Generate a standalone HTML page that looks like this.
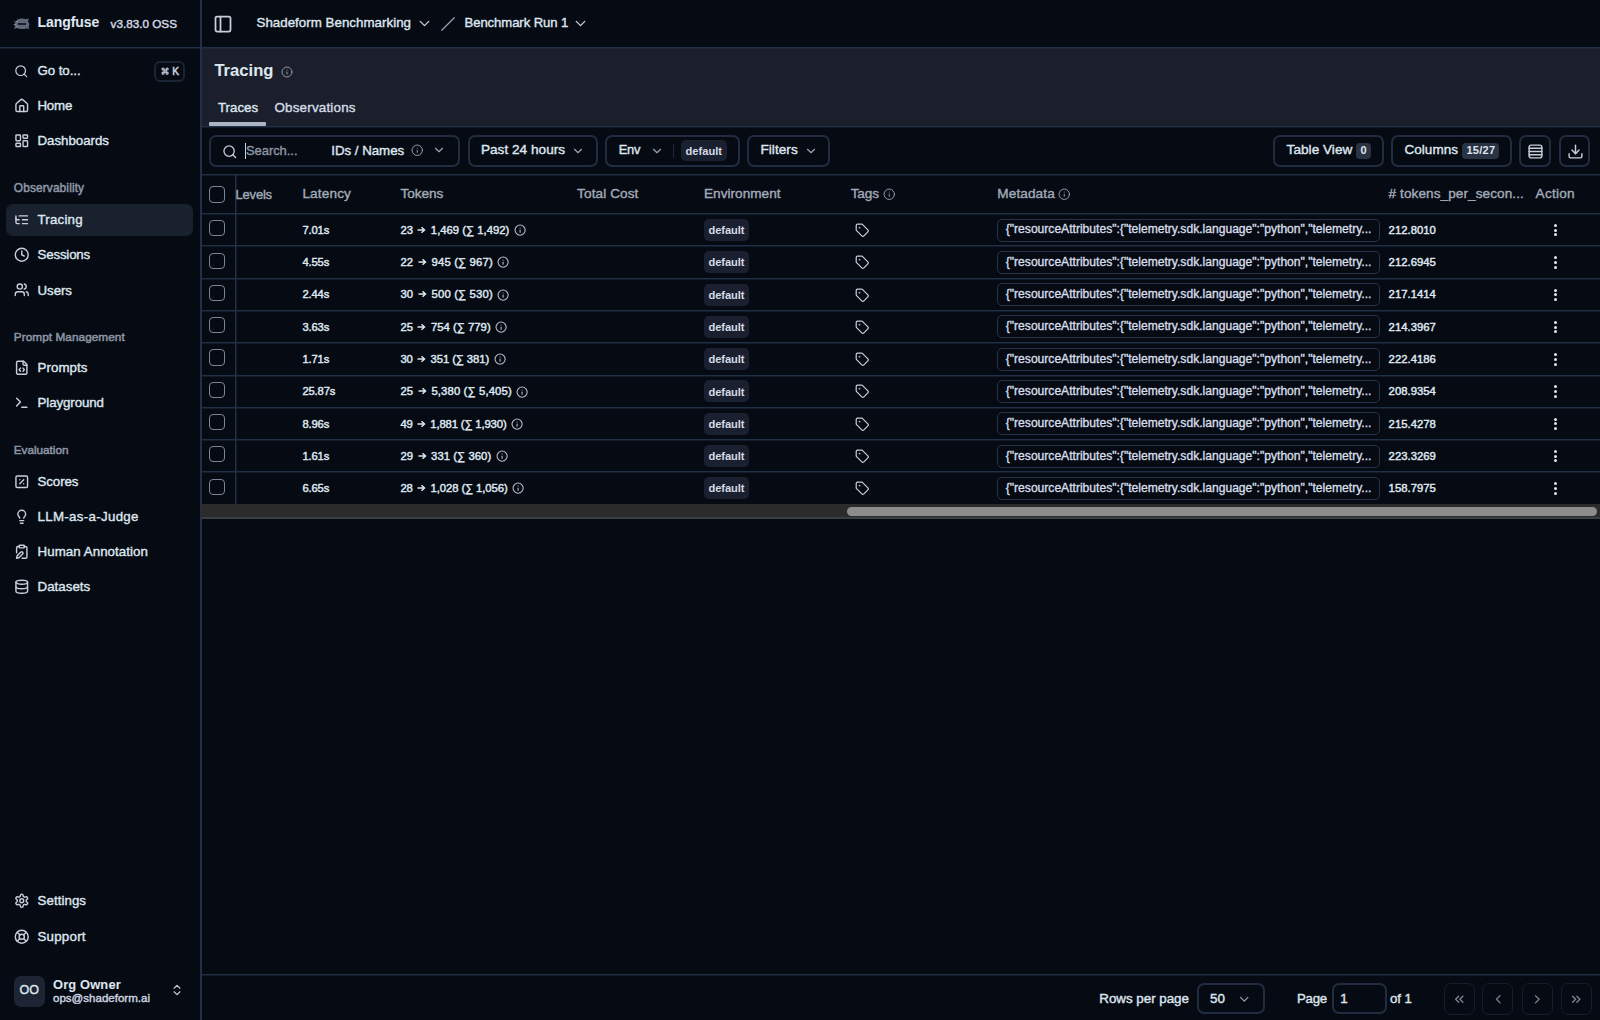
<!DOCTYPE html>
<html><head><meta charset="utf-8"><style>
html,body{margin:0;padding:0;width:1600px;height:1020px;overflow:hidden;background:#060a13}
body{position:relative;font-family:"Liberation Sans",sans-serif}
.a{position:absolute}
.t{position:absolute;white-space:nowrap}
</style></head><body>
<div class="a" style="left:0.00px;top:0.00px;width:1600.00px;height:1020.00px;background:#060a13"></div>
<div class="a" style="left:201.00px;top:48.00px;width:1399.00px;height:79.00px;background:#1a1f2b"></div>
<div class="a" style="left:0.00px;top:47.00px;width:1600.00px;height:1.00px;background:#223047"></div>
<div class="a" style="left:0.00px;top:48.00px;width:1600.00px;height:1.00px;background:rgba(34,48,71,0.45)"></div>
<div class="a" style="left:200.00px;top:0.00px;width:2.00px;height:1020.00px;background:#223047"></div>
<div class="a" style="left:201.00px;top:126.00px;width:1399.00px;height:1.00px;background:#223047"></div>
<div class="a" style="left:201.00px;top:127.00px;width:1399.00px;height:1.00px;background:rgba(34,48,71,0.45)"></div>
<div class="a" style="left:201.00px;top:174.00px;width:1399.00px;height:1.00px;background:#223047"></div>
<div class="a" style="left:201.00px;top:175.00px;width:1399.00px;height:1.00px;background:rgba(34,48,71,0.45)"></div>
<div class="a" style="left:201.00px;top:974.00px;width:1399.00px;height:1.00px;background:#223047"></div>
<div class="a" style="left:201.00px;top:975.00px;width:1399.00px;height:1.00px;background:rgba(34,48,71,0.45)"></div>
<svg class="a" style="left:13px;top:17.5px" width="17" height="11.5" viewBox="0 0 17 11.5"><path d="M0.5 2.5 3.5 4 4.5 1.5C6.5 0.3 10 0 12.5 1L16 0.8 15 3.5C16.5 5 16.8 7 15.5 9L16.5 11 13 10.5C10.5 11.5 6.5 11.5 4 10L1 11 2.2 8 0 6.5 2.5 5.5z" fill="#5f6778"/><path d="M3 4 5 2.5M2 6.2h1.2M3.5 9.2 5 8" stroke="#9aa2b0" stroke-width="1"/><path d="M5 6H13" stroke="#0b0f17" stroke-width="1.6"/></svg>
<div class="t" style="left:37.50px;top:15.45px;font-size:14px;line-height:14px;color:#dfe6ef;font-weight:700;-webkit-text-stroke:0.05px #dfe6ef;letter-spacing:-0.047px;">Langfuse</div>
<div class="t" style="left:110.60px;top:17.79px;font-size:11.7px;line-height:11.7px;color:#cfd6e0;font-weight:400;-webkit-text-stroke:0.45px #cfd6e0;letter-spacing:0.006px;">v3.83.0 OSS</div>
<svg class="a" style="left:14.20px;top:64.20px;" width="14.5" height="14.5" viewBox="0 0 24 24" fill="none" stroke="#c8cfda" stroke-width="2" stroke-linecap="round" stroke-linejoin="round"><circle cx="11" cy="11" r="8"/><path d="m21 21-4.3-4.3"/></svg>
<div class="t" style="left:37.50px;top:64.34px;font-size:13.3px;line-height:13.3px;color:#dfe6ef;font-weight:400;-webkit-text-stroke:0.38px #dfe6ef;letter-spacing:-0.073px;">Go to...</div>
<div class="a" style="left:154.00px;top:61.00px;width:31.00px;height:20.50px;border:2px solid #1b2436;border-radius:6px;box-sizing:border-box"></div>
<svg class="a" style="left:160.80px;top:67.20px;" width="8.2" height="8.2" viewBox="0 0 24 24" fill="none" stroke="#c8cfda" stroke-width="3.2" stroke-linecap="round" stroke-linejoin="round"><path d="M15 6v12a3 3 0 1 0 3-3H6a3 3 0 1 0 3 3V6a3 3 0 1 0-3 3h12a3 3 0 1 0-3-3"/></svg>
<div class="t" style="left:172.20px;top:66.76px;font-size:10.2px;line-height:10.2px;color:#c8cfda;font-weight:400;-webkit-text-stroke:0.5px #c8cfda;letter-spacing:-0.503px;">K</div>
<svg class="a" style="left:13.50px;top:98.10px;" width="15.5" height="15.5" viewBox="0 0 24 24" fill="none" stroke="#c8cfda" stroke-width="2.2" stroke-linecap="round" stroke-linejoin="round"><path d="M15 21v-8a1 1 0 0 0-1-1h-4a1 1 0 0 0-1 1v8"/><path d="M3 10a2 2 0 0 1 .709-1.528l7-5.999a2 2 0 0 1 2.582 0l7 5.999A2 2 0 0 1 21 10v9a2 2 0 0 1-2 2H5a2 2 0 0 1-2-2z"/></svg>
<div class="t" style="left:37.50px;top:99.34px;font-size:13.3px;line-height:13.3px;color:#dfe6ef;font-weight:400;-webkit-text-stroke:0.38px #dfe6ef;letter-spacing:-0.228px;">Home</div>
<svg class="a" style="left:13.50px;top:133.10px;" width="15.5" height="15.5" viewBox="0 0 24 24" fill="none" stroke="#c8cfda" stroke-width="2.2" stroke-linecap="round" stroke-linejoin="round"><rect width="7" height="9" x="3" y="3" rx="1"/><rect width="7" height="5" x="14" y="3" rx="1"/><rect width="7" height="9" x="14" y="12" rx="1"/><rect width="7" height="5" x="3" y="16" rx="1"/></svg>
<div class="t" style="left:37.50px;top:134.34px;font-size:13.3px;line-height:13.3px;color:#dfe6ef;font-weight:400;-webkit-text-stroke:0.38px #dfe6ef;letter-spacing:-0.024px;">Dashboards</div>
<div class="t" style="left:13.80px;top:182.72px;font-size:11.9px;line-height:11.9px;color:#8d96a5;font-weight:400;-webkit-text-stroke:0.5px #8d96a5;letter-spacing:0.127px;">Observability</div>
<div class="a" style="left:5.70px;top:204.00px;width:187.00px;height:31.50px;background:#19202e;border-radius:7px"></div>
<svg class="a" style="left:13.50px;top:211.50px;" width="15.5" height="15.5" viewBox="0 0 24 24" fill="none" stroke="#c8cfda" stroke-width="2.2" stroke-linecap="round" stroke-linejoin="round"><path d="M21 12h-8"/><path d="M21 6H8"/><path d="M21 18h-8"/><path d="M3 6v4c0 1.1.9 2 2 2h3"/><path d="M3 10v6c0 1.1.9 2 2 2h3"/></svg>
<div class="t" style="left:37.50px;top:212.74px;font-size:13.3px;line-height:13.3px;color:#dfe6ef;font-weight:400;-webkit-text-stroke:0.38px #dfe6ef;letter-spacing:0.208px;">Tracing</div>
<svg class="a" style="left:13.50px;top:246.60px;" width="15.5" height="15.5" viewBox="0 0 24 24" fill="none" stroke="#c8cfda" stroke-width="2.2" stroke-linecap="round" stroke-linejoin="round"><circle cx="12" cy="12" r="10"/><polyline points="12 6 12 12 16 14"/></svg>
<div class="t" style="left:37.50px;top:247.84px;font-size:13.3px;line-height:13.3px;color:#dfe6ef;font-weight:400;-webkit-text-stroke:0.38px #dfe6ef;letter-spacing:-0.174px;">Sessions</div>
<svg class="a" style="left:13.50px;top:282.30px;" width="15.5" height="15.5" viewBox="0 0 24 24" fill="none" stroke="#c8cfda" stroke-width="2.2" stroke-linecap="round" stroke-linejoin="round"><path d="M16 21v-2a4 4 0 0 0-4-4H6a4 4 0 0 0-4 4v2"/><circle cx="9" cy="7" r="4"/><path d="M22 21v-2a4 4 0 0 0-3-3.87"/><path d="M16 3.13a4 4 0 0 1 0 7.75"/></svg>
<div class="t" style="left:37.50px;top:283.54px;font-size:13.3px;line-height:13.3px;color:#dfe6ef;font-weight:400;-webkit-text-stroke:0.38px #dfe6ef;letter-spacing:-0.057px;">Users</div>
<div class="t" style="left:13.80px;top:331.91px;font-size:11.8px;line-height:11.8px;color:#8d96a5;font-weight:400;-webkit-text-stroke:0.5px #8d96a5;letter-spacing:0.048px;">Prompt Management</div>
<svg class="a" style="left:13.50px;top:360.00px;" width="15.5" height="15.5" viewBox="0 0 24 24" fill="none" stroke="#c8cfda" stroke-width="2.2" stroke-linecap="round" stroke-linejoin="round"><path d="M10 12.5 8 15l2 2.5"/><path d="m14 12.5 2 2.5-2 2.5"/><path d="M14 2v4a2 2 0 0 0 2 2h4"/><path d="M15 2H6a2 2 0 0 0-2 2v16a2 2 0 0 0 2 2h12a2 2 0 0 0 2-2V7z"/></svg>
<div class="t" style="left:37.50px;top:361.24px;font-size:13.3px;line-height:13.3px;color:#dfe6ef;font-weight:400;-webkit-text-stroke:0.38px #dfe6ef;letter-spacing:0.081px;">Prompts</div>
<svg class="a" style="left:13.50px;top:395.00px;" width="15.5" height="15.5" viewBox="0 0 24 24" fill="none" stroke="#c8cfda" stroke-width="2.2" stroke-linecap="round" stroke-linejoin="round"><polyline points="4 17 10 11 4 5"/><line x1="12" x2="20" y1="19" y2="19"/></svg>
<div class="t" style="left:37.50px;top:396.24px;font-size:13.3px;line-height:13.3px;color:#dfe6ef;font-weight:400;-webkit-text-stroke:0.38px #dfe6ef;letter-spacing:-0.087px;">Playground</div>
<div class="t" style="left:13.80px;top:445.01px;font-size:11.8px;line-height:11.8px;color:#8d96a5;font-weight:400;-webkit-text-stroke:0.5px #8d96a5;letter-spacing:-0.045px;">Evaluation</div>
<svg class="a" style="left:13.50px;top:473.75px;" width="15.5" height="15.5" viewBox="0 0 24 24" fill="none" stroke="#c8cfda" stroke-width="2.2" stroke-linecap="round" stroke-linejoin="round"><rect width="18" height="18" x="3" y="3" rx="2"/><path d="m15 9-6 6"/><path d="M9 9h.01"/><path d="M15 15h.01"/></svg>
<div class="t" style="left:37.50px;top:474.99px;font-size:13.3px;line-height:13.3px;color:#dfe6ef;font-weight:400;-webkit-text-stroke:0.38px #dfe6ef;letter-spacing:-0.078px;">Scores</div>
<svg class="a" style="left:13.50px;top:508.75px;" width="15.5" height="15.5" viewBox="0 0 24 24" fill="none" stroke="#c8cfda" stroke-width="2.2" stroke-linecap="round" stroke-linejoin="round"><path d="M15 14c.2-1 .7-1.7 1.5-2.5 1-.9 1.5-2.2 1.5-3.5A6 6 0 0 0 6 8c0 1 .2 2.2 1.5 3.5.7.7 1.3 1.5 1.5 2.5"/><path d="M9 18h6"/><path d="M10 22h4"/></svg>
<div class="t" style="left:37.50px;top:509.99px;font-size:13.3px;line-height:13.3px;color:#dfe6ef;font-weight:400;-webkit-text-stroke:0.38px #dfe6ef;letter-spacing:0.320px;">LLM-as-a-Judge</div>
<svg class="a" style="left:13.50px;top:544.00px;" width="15.5" height="15.5" viewBox="0 0 24 24" fill="none" stroke="#c8cfda" stroke-width="2.2" stroke-linecap="round" stroke-linejoin="round"><rect width="8" height="4" x="8" y="2" rx="1"/><path d="M10.4 12.6a2 2 0 0 1 3 3L8 21l-4 1 1-4Z"/><path d="M16 4h2a2 2 0 0 1 2 2v14a2 2 0 0 1-2 2h-5.5"/><path d="M4 13.5V6a2 2 0 0 1 2-2h2"/></svg>
<div class="t" style="left:37.50px;top:545.24px;font-size:13.3px;line-height:13.3px;color:#dfe6ef;font-weight:400;-webkit-text-stroke:0.38px #dfe6ef;letter-spacing:0.071px;">Human Annotation</div>
<svg class="a" style="left:13.50px;top:579.00px;" width="15.5" height="15.5" viewBox="0 0 24 24" fill="none" stroke="#c8cfda" stroke-width="2.2" stroke-linecap="round" stroke-linejoin="round"><ellipse cx="12" cy="5" rx="9" ry="3"/><path d="M3 5V19A9 3 0 0 0 21 19V5"/><path d="M3 12A9 3 0 0 0 21 12"/></svg>
<div class="t" style="left:37.50px;top:580.24px;font-size:13.3px;line-height:13.3px;color:#dfe6ef;font-weight:400;-webkit-text-stroke:0.38px #dfe6ef;letter-spacing:0.038px;">Datasets</div>
<svg class="a" style="left:13.50px;top:893.00px;" width="15.5" height="15.5" viewBox="0 0 24 24" fill="none" stroke="#c8cfda" stroke-width="2.2" stroke-linecap="round" stroke-linejoin="round"><path d="M12.22 2h-.44a2 2 0 0 0-2 2v.18a2 2 0 0 1-1 1.73l-.43.25a2 2 0 0 1-2 0l-.15-.08a2 2 0 0 0-2.73.73l-.22.38a2 2 0 0 0 .73 2.73l.15.1a2 2 0 0 1 1 1.72v.51a2 2 0 0 1-1 1.74l-.15.09a2 2 0 0 0-.73 2.73l.22.38a2 2 0 0 0 2.73.73l.15-.08a2 2 0 0 1 2 0l.43.25a2 2 0 0 1 1 1.73V20a2 2 0 0 0 2 2h.44a2 2 0 0 0 2-2v-.18a2 2 0 0 1 1-1.73l.43-.25a2 2 0 0 1 2 0l.15.08a2 2 0 0 0 2.73-.73l.22-.39a2 2 0 0 0-.73-2.73l-.15-.08a2 2 0 0 1-1-1.74v-.5a2 2 0 0 1 1-1.74l.15-.09a2 2 0 0 0 .73-2.73l-.22-.38a2 2 0 0 0-2.73-.73l-.15.08a2 2 0 0 1-2 0l-.43-.25a2 2 0 0 1-1-1.73V4a2 2 0 0 0-2-2z"/><circle cx="12" cy="12" r="3"/></svg>
<div class="t" style="left:37.50px;top:894.24px;font-size:13.3px;line-height:13.3px;color:#dfe6ef;font-weight:400;-webkit-text-stroke:0.38px #dfe6ef;letter-spacing:0.064px;">Settings</div>
<svg class="a" style="left:13.50px;top:928.50px;" width="15.5" height="15.5" viewBox="0 0 24 24" fill="none" stroke="#c8cfda" stroke-width="2.2" stroke-linecap="round" stroke-linejoin="round"><circle cx="12" cy="12" r="10"/><path d="m4.93 4.93 4.24 4.24"/><path d="m14.83 9.17 4.24-4.24"/><path d="m14.83 14.83 4.24 4.24"/><path d="m9.17 14.83-4.24 4.24"/><circle cx="12" cy="12" r="4"/></svg>
<div class="t" style="left:37.50px;top:929.74px;font-size:13.3px;line-height:13.3px;color:#dfe6ef;font-weight:400;-webkit-text-stroke:0.38px #dfe6ef;letter-spacing:0.237px;">Support</div>
<div class="a" style="left:13.75px;top:975.50px;width:31.25px;height:31.25px;background:#1d2434;border-radius:7px"></div>
<div class="t" style="left:19.50px;top:984.42px;font-size:12.5px;line-height:12.5px;color:#dfe6ef;font-weight:400;-webkit-text-stroke:0.38px #dfe6ef;">OO</div>
<div class="t" style="left:53.00px;top:978.58px;font-size:12.9px;line-height:12.9px;color:#dfe6ef;font-weight:700;-webkit-text-stroke:0.05px #dfe6ef;letter-spacing:0.137px;">Org Owner</div>
<div class="t" style="left:53.00px;top:992.76px;font-size:11.5px;line-height:11.5px;color:#cfd6e0;font-weight:400;-webkit-text-stroke:0.4px #cfd6e0;letter-spacing:0.021px;">ops@shadeform.ai</div>
<svg class="a" style="left:170.00px;top:983.00px;" width="14" height="14" viewBox="0 0 24 24" fill="none" stroke="#c8cfda" stroke-width="2" stroke-linecap="round" stroke-linejoin="round"><path d="m7 15 5 5 5-5"/><path d="m7 9 5-5 5 5"/></svg>
<svg class="a" style="left:213.00px;top:13.50px;" width="20" height="20" viewBox="0 0 24 24" fill="none" stroke="#c8cfda" stroke-width="2.1" stroke-linecap="round" stroke-linejoin="round"><rect width="18" height="18" x="3" y="3" rx="2"/><path d="M9 3v18"/></svg>
<div class="t" style="left:256.50px;top:15.99px;font-size:13.3px;line-height:13.3px;color:#dfe6ef;font-weight:400;-webkit-text-stroke:0.38px #dfe6ef;letter-spacing:0.035px;">Shadeform Benchmarking</div>
<svg class="a" style="left:415.50px;top:14.70px;" width="17" height="17" viewBox="0 0 24 24" fill="none" stroke="#c8cfda" stroke-width="1.9" stroke-linecap="round" stroke-linejoin="round"><path d="m6 9 6 6 6-6"/></svg>
<svg class="a" style="left:440px;top:16px" width="16" height="16" viewBox="0 0 16 16"><path d="M1.5 14.5 14.5 1.5" stroke="#9aa3b2" stroke-width="1.2"/></svg>
<div class="t" style="left:464.50px;top:16.31px;font-size:13.1px;line-height:13.1px;color:#dfe6ef;font-weight:400;-webkit-text-stroke:0.38px #dfe6ef;letter-spacing:-0.068px;">Benchmark Run 1</div>
<svg class="a" style="left:572.00px;top:14.70px;" width="17" height="17" viewBox="0 0 24 24" fill="none" stroke="#c8cfda" stroke-width="1.9" stroke-linecap="round" stroke-linejoin="round"><path d="m6 9 6 6 6-6"/></svg>
<div class="t" style="left:214.40px;top:62.84px;font-size:16.6px;line-height:16.6px;color:#dfe6ef;font-weight:700;-webkit-text-stroke:0.05px #dfe6ef;letter-spacing:0.009px;">Tracing</div>
<svg class="a" style="left:281.00px;top:65.50px;" width="12" height="12" viewBox="0 0 24 24" fill="none" stroke="#9aa3b2" stroke-width="1.8" stroke-linecap="round" stroke-linejoin="round"><circle cx="12" cy="12" r="10"/><path d="M12 16v-4"/><path d="M12 8h.01"/></svg>
<div class="t" style="left:218.00px;top:100.68px;font-size:13.25px;line-height:13.25px;color:#dfe6ef;font-weight:400;-webkit-text-stroke:0.38px #dfe6ef;letter-spacing:-0.000px;">Traces</div>
<div class="t" style="left:274.40px;top:100.55px;font-size:13.4px;line-height:13.4px;color:#d4dbe6;font-weight:400;-webkit-text-stroke:0.38px #d4dbe6;letter-spacing:0.204px;">Observations</div>
<div class="a" style="left:209.40px;top:122.00px;width:57.00px;height:4.00px;background:#aab4c4;border-radius:1px"></div>
<div class="a" style="left:209.30px;top:135.00px;width:250.60px;height:31.50px;border:2px solid #212c40;border-radius:7px;box-sizing:border-box;"></div>
<svg class="a" style="left:221.50px;top:143.50px;" width="15.5" height="15.5" viewBox="0 0 24 24" fill="none" stroke="#c8cfda" stroke-width="2" stroke-linecap="round" stroke-linejoin="round"><circle cx="11" cy="11" r="8"/><path d="m21 21-4.3-4.3"/></svg>
<div class="a" style="left:244.50px;top:142.70px;width:1.00px;height:16.00px;background:#c8cfda"></div>
<div class="t" style="left:246.00px;top:144.78px;font-size:12.9px;line-height:12.9px;color:#8d96a5;font-weight:400;-webkit-text-stroke:0.38px #8d96a5;letter-spacing:-0.016px;">Search...</div>
<div class="t" style="left:331.30px;top:144.44px;font-size:13.3px;line-height:13.3px;color:#dfe6ef;font-weight:400;-webkit-text-stroke:0.38px #dfe6ef;letter-spacing:-0.026px;">IDs / Names</div>
<svg class="a" style="left:411.30px;top:144.20px;" width="12.5" height="12.5" viewBox="0 0 24 24" fill="none" stroke="#9aa3b2" stroke-width="1.8" stroke-linecap="round" stroke-linejoin="round"><circle cx="12" cy="12" r="10"/><path d="M12 16v-4"/><path d="M12 8h.01"/></svg>
<svg class="a" style="left:432.00px;top:143.00px;" width="14" height="14" viewBox="0 0 24 24" fill="none" stroke="#9aa3b2" stroke-width="2" stroke-linecap="round" stroke-linejoin="round"><path d="m6 9 6 6 6-6"/></svg>
<div class="a" style="left:467.60px;top:135.00px;width:130.20px;height:31.50px;border:2px solid #212c40;border-radius:7px;box-sizing:border-box;"></div>
<div class="t" style="left:480.90px;top:143.18px;font-size:13.6px;line-height:13.6px;color:#dfe6ef;font-weight:400;-webkit-text-stroke:0.38px #dfe6ef;letter-spacing:0.032px;">Past 24 hours</div>
<svg class="a" style="left:570.50px;top:143.50px;" width="14" height="14" viewBox="0 0 24 24" fill="none" stroke="#9aa3b2" stroke-width="2" stroke-linecap="round" stroke-linejoin="round"><path d="m6 9 6 6 6-6"/></svg>
<div class="a" style="left:605.30px;top:135.00px;width:134.50px;height:31.50px;border:2px solid #212c40;border-radius:7px;box-sizing:border-box;"></div>
<div class="t" style="left:618.70px;top:143.78px;font-size:12.9px;line-height:12.9px;color:#dfe6ef;font-weight:400;-webkit-text-stroke:0.38px #dfe6ef;letter-spacing:-0.213px;">Env</div>
<svg class="a" style="left:649.50px;top:143.50px;" width="14" height="14" viewBox="0 0 24 24" fill="none" stroke="#9aa3b2" stroke-width="2" stroke-linecap="round" stroke-linejoin="round"><path d="m6 9 6 6 6-6"/></svg>
<div class="a" style="left:672.50px;top:143.50px;width:1.00px;height:14.50px;background:#1d283a"></div>
<div class="a" style="left:680.90px;top:139.70px;width:46.30px;height:21.40px;background:#1a2030;border-radius:5px"></div>
<div class="t" style="left:685.60px;top:145.50px;font-size:11.1px;line-height:11.1px;color:#d4dbe6;font-weight:700;-webkit-text-stroke:0px #d4dbe6;letter-spacing:0.002px;">default</div>
<div class="a" style="left:747.40px;top:135.00px;width:83.10px;height:31.50px;border:2px solid #212c40;border-radius:7px;box-sizing:border-box;"></div>
<div class="t" style="left:760.40px;top:143.18px;font-size:13.6px;line-height:13.6px;color:#dfe6ef;font-weight:400;-webkit-text-stroke:0.38px #dfe6ef;letter-spacing:0.047px;">Filters</div>
<svg class="a" style="left:803.50px;top:143.50px;" width="14" height="14" viewBox="0 0 24 24" fill="none" stroke="#9aa3b2" stroke-width="2" stroke-linecap="round" stroke-linejoin="round"><path d="m6 9 6 6 6-6"/></svg>
<div class="a" style="left:1273.20px;top:135.00px;width:110.50px;height:31.50px;border:2px solid #212c40;border-radius:7px;box-sizing:border-box;"></div>
<div class="t" style="left:1286.60px;top:143.18px;font-size:13.6px;line-height:13.6px;color:#dfe6ef;font-weight:400;-webkit-text-stroke:0.38px #dfe6ef;letter-spacing:0.026px;">Table View</div>
<div class="a" style="left:1356.00px;top:143.00px;width:15.00px;height:15.60px;background:#2a3344;border-radius:4px"></div>
<div class="t" style="left:1360.50px;top:144.89px;font-size:11px;line-height:11px;color:#dfe6ef;font-weight:700;-webkit-text-stroke:0px #dfe6ef;letter-spacing:0.384px;">0</div>
<div class="a" style="left:1391.30px;top:135.00px;width:120.50px;height:31.50px;border:2px solid #212c40;border-radius:7px;box-sizing:border-box;"></div>
<div class="t" style="left:1404.50px;top:143.27px;font-size:13.5px;line-height:13.5px;color:#dfe6ef;font-weight:400;-webkit-text-stroke:0.38px #dfe6ef;letter-spacing:0.038px;">Columns</div>
<div class="a" style="left:1461.90px;top:143.00px;width:37.60px;height:15.60px;background:#2a3344;border-radius:4px"></div>
<div class="t" style="left:1466.50px;top:144.89px;font-size:11px;line-height:11px;color:#dfe6ef;font-weight:700;-webkit-text-stroke:0px #dfe6ef;letter-spacing:0.245px;">15/27</div>
<div class="a" style="left:1519.20px;top:135.00px;width:31.50px;height:31.50px;border:2px solid #212c40;border-radius:7px;box-sizing:border-box;"></div>
<svg class="a" style="left:1526.50px;top:142.50px;" width="17" height="17" viewBox="0 0 24 24" fill="none" stroke="#c8cfda" stroke-width="2" stroke-linecap="round" stroke-linejoin="round"><rect width="18" height="18" x="3" y="3" rx="3"/><path d="M21 7.5H3"/><path d="M21 12H3"/><path d="M21 16.5H3"/></svg>
<div class="a" style="left:1558.60px;top:135.00px;width:31.80px;height:31.50px;border:2px solid #212c40;border-radius:7px;box-sizing:border-box;"></div>
<svg class="a" style="left:1566.50px;top:142.50px;" width="17" height="17" viewBox="0 0 24 24" fill="none" stroke="#c8cfda" stroke-width="2" stroke-linecap="round" stroke-linejoin="round"><path d="M21 15v4a2 2 0 0 1-2 2H5a2 2 0 0 1-2-2v-4"/><polyline points="7 10 12 15 17 10"/><line x1="12" x2="12" y1="15" y2="3"/></svg>
<div class="a" style="left:201.00px;top:213.00px;width:1399.00px;height:1.00px;background:#223047"></div>
<div class="a" style="left:201.00px;top:214.00px;width:1399.00px;height:1.00px;background:rgba(34,48,71,0.45)"></div>
<div class="a" style="left:235.00px;top:175.00px;width:1.00px;height:329.00px;background:#223047"></div>
<div class="a" style="left:236.00px;top:175.00px;width:1.00px;height:329.00px;background:rgba(34,48,71,0.45)"></div>
<div class="a" style="left:209.10px;top:186.40px;width:15.80px;height:16.20px;border:1.3px solid #7c8594;border-radius:4px;box-sizing:border-box"></div>
<div class="t" style="left:235.60px;top:187.99px;font-size:13.0px;line-height:13.0px;color:#a2abb9;font-weight:400;-webkit-text-stroke:0.38px #a2abb9;letter-spacing:-0.217px;">Levels</div>
<div class="t" style="left:302.40px;top:187.48px;font-size:13.6px;line-height:13.6px;color:#a2abb9;font-weight:400;-webkit-text-stroke:0.38px #a2abb9;letter-spacing:0.145px;">Latency</div>
<div class="t" style="left:400.40px;top:187.48px;font-size:13.6px;line-height:13.6px;color:#a2abb9;font-weight:400;-webkit-text-stroke:0.38px #a2abb9;letter-spacing:-0.037px;">Tokens</div>
<div class="t" style="left:577.10px;top:187.48px;font-size:13.6px;line-height:13.6px;color:#a2abb9;font-weight:400;-webkit-text-stroke:0.38px #a2abb9;letter-spacing:0.093px;">Total Cost</div>
<div class="t" style="left:704.00px;top:187.48px;font-size:13.6px;line-height:13.6px;color:#a2abb9;font-weight:400;-webkit-text-stroke:0.38px #a2abb9;letter-spacing:0.025px;">Environment</div>
<div class="t" style="left:850.65px;top:187.48px;font-size:13.6px;line-height:13.6px;color:#a2abb9;font-weight:400;-webkit-text-stroke:0.38px #a2abb9;letter-spacing:-0.124px;">Tags</div>
<div class="t" style="left:997.35px;top:187.48px;font-size:13.6px;line-height:13.6px;color:#a2abb9;font-weight:400;-webkit-text-stroke:0.38px #a2abb9;letter-spacing:0.098px;">Metadata</div>
<div class="t" style="left:1388.60px;top:187.48px;font-size:13.6px;line-height:13.6px;color:#a2abb9;font-weight:400;-webkit-text-stroke:0.38px #a2abb9;letter-spacing:0.074px;"># tokens_per_secon...</div>
<div class="t" style="left:1535.60px;top:187.48px;font-size:13.6px;line-height:13.6px;color:#a2abb9;font-weight:400;-webkit-text-stroke:0.38px #a2abb9;letter-spacing:0.241px;">Action</div>
<svg class="a" style="left:883.20px;top:188.00px;" width="12.5" height="12.5" viewBox="0 0 24 24" fill="none" stroke="#9aa3b2" stroke-width="1.8" stroke-linecap="round" stroke-linejoin="round"><circle cx="12" cy="12" r="10"/><path d="M12 16v-4"/><path d="M12 8h.01"/></svg>
<svg class="a" style="left:1058.30px;top:188.00px;" width="12.5" height="12.5" viewBox="0 0 24 24" fill="none" stroke="#9aa3b2" stroke-width="1.8" stroke-linecap="round" stroke-linejoin="round"><circle cx="12" cy="12" r="10"/><path d="M12 16v-4"/><path d="M12 8h.01"/></svg>
<div class="a" style="left:201.00px;top:245.30px;width:1399.00px;height:1.00px;background:#223047"></div>
<div class="a" style="left:201.00px;top:246.30px;width:1399.00px;height:1.00px;background:rgba(34,48,71,0.45)"></div>
<div class="a" style="left:209.10px;top:220.20px;width:15.80px;height:16.20px;border:1.3px solid #7c8594;border-radius:4px;box-sizing:border-box"></div>
<div class="t tok" style="left:400.40px;top:224.73px;font-size:11.3px;line-height:11.3px;color:#dfe6ef;font-weight:400;-webkit-text-stroke:0.45px #dfe6ef;letter-spacing:0.002px">23 <svg width="9" height="8" viewBox="0 0 9 8" style="vertical-align:0px;margin:0 1.3px"><path d="M0.5 4H7M4.5 1.2 7.5 4 4.5 6.8" fill="none" stroke="#dfe6ef" stroke-width="1.5"/></svg> 1,469 (∑ 1,492)</div>
<div class="t" style="left:302.40px;top:224.82px;font-size:11.2px;line-height:11.2px;color:#dfe6ef;font-weight:400;-webkit-text-stroke:0.45px #dfe6ef;letter-spacing:-0.120px">7.01s</div>
<div class="t" style="left:1388.60px;top:224.73px;font-size:11.3px;line-height:11.3px;color:#dfe6ef;font-weight:400;-webkit-text-stroke:0.45px #dfe6ef;letter-spacing:0.024px">212.8010</div>
<div class="a" style="left:703.70px;top:218.90px;width:45.80px;height:22.00px;background:#1a2030;border-radius:5px"></div>
<div class="t" style="left:708.40px;top:225.00px;font-size:11.1px;line-height:11.1px;color:#d4dbe6;font-weight:700;-webkit-text-stroke:0px #d4dbe6;letter-spacing:-0.031px;">default</div>
<svg class="a" style="left:854.50px;top:222.90px;" width="14.5" height="14.5" viewBox="0 0 24 24" fill="none" stroke="#c8cfda" stroke-width="2" stroke-linecap="round" stroke-linejoin="round"><path d="M12.586 2.586A2 2 0 0 0 11.172 2H4a2 2 0 0 0-2 2v7.172a2 2 0 0 0 .586 1.414l8.704 8.704a2.426 2.426 0 0 0 3.42 0l6.58-6.58a2.426 2.426 0 0 0 0-3.42z"/><circle cx="7.5" cy="7.5" r=".5" fill="currentColor"/></svg>
<div class="a" style="left:997.35px;top:218.50px;width:383.00px;height:23.10px;border:1px solid #28334a;border-radius:5px;box-sizing:border-box"></div>
<div class="t" style="left:1005.75px;top:223.45px;font-size:12.1px;line-height:12.1px;color:#d6dee8;font-weight:400;-webkit-text-stroke:0.35px #d6dee8;letter-spacing:-0.001px;">{&quot;resourceAttributes&quot;:{&quot;telemetry.sdk.language&quot;:&quot;python&quot;,&quot;telemetry...</div>
<div class="a" style="left:1553.80px;top:223.90px;width:3.00px;height:3.00px;background:#dfe6ef;border-radius:50%"></div>
<div class="a" style="left:1553.80px;top:228.60px;width:3.00px;height:3.00px;background:#dfe6ef;border-radius:50%"></div>
<div class="a" style="left:1553.80px;top:233.30px;width:3.00px;height:3.00px;background:#dfe6ef;border-radius:50%"></div>
<div class="a" style="left:201.00px;top:277.60px;width:1399.00px;height:1.00px;background:#223047"></div>
<div class="a" style="left:201.00px;top:278.60px;width:1399.00px;height:1.00px;background:rgba(34,48,71,0.45)"></div>
<div class="a" style="left:209.10px;top:252.50px;width:15.80px;height:16.20px;border:1.3px solid #7c8594;border-radius:4px;box-sizing:border-box"></div>
<div class="t tok" style="left:400.40px;top:257.03px;font-size:11.3px;line-height:11.3px;color:#dfe6ef;font-weight:400;-webkit-text-stroke:0.45px #dfe6ef;letter-spacing:0.163px">22 <svg width="9" height="8" viewBox="0 0 9 8" style="vertical-align:0px;margin:0 1.3px"><path d="M0.5 4H7M4.5 1.2 7.5 4 4.5 6.8" fill="none" stroke="#dfe6ef" stroke-width="1.5"/></svg> 945 (∑ 967)</div>
<div class="t" style="left:302.40px;top:257.12px;font-size:11.2px;line-height:11.2px;color:#dfe6ef;font-weight:400;-webkit-text-stroke:0.45px #dfe6ef;letter-spacing:-0.120px">4.55s</div>
<div class="t" style="left:1388.60px;top:257.03px;font-size:11.3px;line-height:11.3px;color:#dfe6ef;font-weight:400;-webkit-text-stroke:0.45px #dfe6ef;letter-spacing:0.024px">212.6945</div>
<div class="a" style="left:703.70px;top:251.20px;width:45.80px;height:22.00px;background:#1a2030;border-radius:5px"></div>
<div class="t" style="left:708.40px;top:257.30px;font-size:11.1px;line-height:11.1px;color:#d4dbe6;font-weight:700;-webkit-text-stroke:0px #d4dbe6;letter-spacing:-0.031px;">default</div>
<svg class="a" style="left:854.50px;top:255.20px;" width="14.5" height="14.5" viewBox="0 0 24 24" fill="none" stroke="#c8cfda" stroke-width="2" stroke-linecap="round" stroke-linejoin="round"><path d="M12.586 2.586A2 2 0 0 0 11.172 2H4a2 2 0 0 0-2 2v7.172a2 2 0 0 0 .586 1.414l8.704 8.704a2.426 2.426 0 0 0 3.42 0l6.58-6.58a2.426 2.426 0 0 0 0-3.42z"/><circle cx="7.5" cy="7.5" r=".5" fill="currentColor"/></svg>
<div class="a" style="left:997.35px;top:250.80px;width:383.00px;height:23.10px;border:1px solid #28334a;border-radius:5px;box-sizing:border-box"></div>
<div class="t" style="left:1005.75px;top:255.75px;font-size:12.1px;line-height:12.1px;color:#d6dee8;font-weight:400;-webkit-text-stroke:0.35px #d6dee8;letter-spacing:-0.001px;">{&quot;resourceAttributes&quot;:{&quot;telemetry.sdk.language&quot;:&quot;python&quot;,&quot;telemetry...</div>
<div class="a" style="left:1553.80px;top:256.20px;width:3.00px;height:3.00px;background:#dfe6ef;border-radius:50%"></div>
<div class="a" style="left:1553.80px;top:260.90px;width:3.00px;height:3.00px;background:#dfe6ef;border-radius:50%"></div>
<div class="a" style="left:1553.80px;top:265.60px;width:3.00px;height:3.00px;background:#dfe6ef;border-radius:50%"></div>
<div class="a" style="left:201.00px;top:309.90px;width:1399.00px;height:1.00px;background:#223047"></div>
<div class="a" style="left:201.00px;top:310.90px;width:1399.00px;height:1.00px;background:rgba(34,48,71,0.45)"></div>
<div class="a" style="left:209.10px;top:284.80px;width:15.80px;height:16.20px;border:1.3px solid #7c8594;border-radius:4px;box-sizing:border-box"></div>
<div class="t tok" style="left:400.40px;top:289.33px;font-size:11.3px;line-height:11.3px;color:#dfe6ef;font-weight:400;-webkit-text-stroke:0.45px #dfe6ef;letter-spacing:0.163px">30 <svg width="9" height="8" viewBox="0 0 9 8" style="vertical-align:0px;margin:0 1.3px"><path d="M0.5 4H7M4.5 1.2 7.5 4 4.5 6.8" fill="none" stroke="#dfe6ef" stroke-width="1.5"/></svg> 500 (∑ 530)</div>
<div class="t" style="left:302.40px;top:289.42px;font-size:11.2px;line-height:11.2px;color:#dfe6ef;font-weight:400;-webkit-text-stroke:0.45px #dfe6ef;letter-spacing:-0.120px">2.44s</div>
<div class="t" style="left:1388.60px;top:289.33px;font-size:11.3px;line-height:11.3px;color:#dfe6ef;font-weight:400;-webkit-text-stroke:0.45px #dfe6ef;letter-spacing:0.024px">217.1414</div>
<div class="a" style="left:703.70px;top:283.50px;width:45.80px;height:22.00px;background:#1a2030;border-radius:5px"></div>
<div class="t" style="left:708.40px;top:289.60px;font-size:11.1px;line-height:11.1px;color:#d4dbe6;font-weight:700;-webkit-text-stroke:0px #d4dbe6;letter-spacing:-0.031px;">default</div>
<svg class="a" style="left:854.50px;top:287.50px;" width="14.5" height="14.5" viewBox="0 0 24 24" fill="none" stroke="#c8cfda" stroke-width="2" stroke-linecap="round" stroke-linejoin="round"><path d="M12.586 2.586A2 2 0 0 0 11.172 2H4a2 2 0 0 0-2 2v7.172a2 2 0 0 0 .586 1.414l8.704 8.704a2.426 2.426 0 0 0 3.42 0l6.58-6.58a2.426 2.426 0 0 0 0-3.42z"/><circle cx="7.5" cy="7.5" r=".5" fill="currentColor"/></svg>
<div class="a" style="left:997.35px;top:283.10px;width:383.00px;height:23.10px;border:1px solid #28334a;border-radius:5px;box-sizing:border-box"></div>
<div class="t" style="left:1005.75px;top:288.05px;font-size:12.1px;line-height:12.1px;color:#d6dee8;font-weight:400;-webkit-text-stroke:0.35px #d6dee8;letter-spacing:-0.001px;">{&quot;resourceAttributes&quot;:{&quot;telemetry.sdk.language&quot;:&quot;python&quot;,&quot;telemetry...</div>
<div class="a" style="left:1553.80px;top:288.50px;width:3.00px;height:3.00px;background:#dfe6ef;border-radius:50%"></div>
<div class="a" style="left:1553.80px;top:293.20px;width:3.00px;height:3.00px;background:#dfe6ef;border-radius:50%"></div>
<div class="a" style="left:1553.80px;top:297.90px;width:3.00px;height:3.00px;background:#dfe6ef;border-radius:50%"></div>
<div class="a" style="left:201.00px;top:342.20px;width:1399.00px;height:1.00px;background:#223047"></div>
<div class="a" style="left:201.00px;top:343.20px;width:1399.00px;height:1.00px;background:rgba(34,48,71,0.45)"></div>
<div class="a" style="left:209.10px;top:317.10px;width:15.80px;height:16.20px;border:1.3px solid #7c8594;border-radius:4px;box-sizing:border-box"></div>
<div class="t tok" style="left:400.40px;top:321.63px;font-size:11.3px;line-height:11.3px;color:#dfe6ef;font-weight:400;-webkit-text-stroke:0.45px #dfe6ef;letter-spacing:0.021px">25 <svg width="9" height="8" viewBox="0 0 9 8" style="vertical-align:0px;margin:0 1.3px"><path d="M0.5 4H7M4.5 1.2 7.5 4 4.5 6.8" fill="none" stroke="#dfe6ef" stroke-width="1.5"/></svg> 754 (∑ 779)</div>
<div class="t" style="left:302.40px;top:321.72px;font-size:11.2px;line-height:11.2px;color:#dfe6ef;font-weight:400;-webkit-text-stroke:0.45px #dfe6ef;letter-spacing:-0.120px">3.63s</div>
<div class="t" style="left:1388.60px;top:321.63px;font-size:11.3px;line-height:11.3px;color:#dfe6ef;font-weight:400;-webkit-text-stroke:0.45px #dfe6ef;letter-spacing:0.024px">214.3967</div>
<div class="a" style="left:703.70px;top:315.80px;width:45.80px;height:22.00px;background:#1a2030;border-radius:5px"></div>
<div class="t" style="left:708.40px;top:321.90px;font-size:11.1px;line-height:11.1px;color:#d4dbe6;font-weight:700;-webkit-text-stroke:0px #d4dbe6;letter-spacing:-0.031px;">default</div>
<svg class="a" style="left:854.50px;top:319.80px;" width="14.5" height="14.5" viewBox="0 0 24 24" fill="none" stroke="#c8cfda" stroke-width="2" stroke-linecap="round" stroke-linejoin="round"><path d="M12.586 2.586A2 2 0 0 0 11.172 2H4a2 2 0 0 0-2 2v7.172a2 2 0 0 0 .586 1.414l8.704 8.704a2.426 2.426 0 0 0 3.42 0l6.58-6.58a2.426 2.426 0 0 0 0-3.42z"/><circle cx="7.5" cy="7.5" r=".5" fill="currentColor"/></svg>
<div class="a" style="left:997.35px;top:315.40px;width:383.00px;height:23.10px;border:1px solid #28334a;border-radius:5px;box-sizing:border-box"></div>
<div class="t" style="left:1005.75px;top:320.35px;font-size:12.1px;line-height:12.1px;color:#d6dee8;font-weight:400;-webkit-text-stroke:0.35px #d6dee8;letter-spacing:-0.001px;">{&quot;resourceAttributes&quot;:{&quot;telemetry.sdk.language&quot;:&quot;python&quot;,&quot;telemetry...</div>
<div class="a" style="left:1553.80px;top:320.80px;width:3.00px;height:3.00px;background:#dfe6ef;border-radius:50%"></div>
<div class="a" style="left:1553.80px;top:325.50px;width:3.00px;height:3.00px;background:#dfe6ef;border-radius:50%"></div>
<div class="a" style="left:1553.80px;top:330.20px;width:3.00px;height:3.00px;background:#dfe6ef;border-radius:50%"></div>
<div class="a" style="left:201.00px;top:374.50px;width:1399.00px;height:1.00px;background:#223047"></div>
<div class="a" style="left:201.00px;top:375.50px;width:1399.00px;height:1.00px;background:rgba(34,48,71,0.45)"></div>
<div class="a" style="left:209.10px;top:349.40px;width:15.80px;height:16.20px;border:1.3px solid #7c8594;border-radius:4px;box-sizing:border-box"></div>
<div class="t tok" style="left:400.40px;top:353.93px;font-size:11.3px;line-height:11.3px;color:#dfe6ef;font-weight:400;-webkit-text-stroke:0.45px #dfe6ef;letter-spacing:-0.087px">30 <svg width="9" height="8" viewBox="0 0 9 8" style="vertical-align:0px;margin:0 1.3px"><path d="M0.5 4H7M4.5 1.2 7.5 4 4.5 6.8" fill="none" stroke="#dfe6ef" stroke-width="1.5"/></svg> 351 (∑ 381)</div>
<div class="t" style="left:302.40px;top:354.02px;font-size:11.2px;line-height:11.2px;color:#dfe6ef;font-weight:400;-webkit-text-stroke:0.45px #dfe6ef;letter-spacing:-0.120px">1.71s</div>
<div class="t" style="left:1388.60px;top:353.93px;font-size:11.3px;line-height:11.3px;color:#dfe6ef;font-weight:400;-webkit-text-stroke:0.45px #dfe6ef;letter-spacing:0.024px">222.4186</div>
<div class="a" style="left:703.70px;top:348.10px;width:45.80px;height:22.00px;background:#1a2030;border-radius:5px"></div>
<div class="t" style="left:708.40px;top:354.20px;font-size:11.1px;line-height:11.1px;color:#d4dbe6;font-weight:700;-webkit-text-stroke:0px #d4dbe6;letter-spacing:-0.031px;">default</div>
<svg class="a" style="left:854.50px;top:352.10px;" width="14.5" height="14.5" viewBox="0 0 24 24" fill="none" stroke="#c8cfda" stroke-width="2" stroke-linecap="round" stroke-linejoin="round"><path d="M12.586 2.586A2 2 0 0 0 11.172 2H4a2 2 0 0 0-2 2v7.172a2 2 0 0 0 .586 1.414l8.704 8.704a2.426 2.426 0 0 0 3.42 0l6.58-6.58a2.426 2.426 0 0 0 0-3.42z"/><circle cx="7.5" cy="7.5" r=".5" fill="currentColor"/></svg>
<div class="a" style="left:997.35px;top:347.70px;width:383.00px;height:23.10px;border:1px solid #28334a;border-radius:5px;box-sizing:border-box"></div>
<div class="t" style="left:1005.75px;top:352.65px;font-size:12.1px;line-height:12.1px;color:#d6dee8;font-weight:400;-webkit-text-stroke:0.35px #d6dee8;letter-spacing:-0.001px;">{&quot;resourceAttributes&quot;:{&quot;telemetry.sdk.language&quot;:&quot;python&quot;,&quot;telemetry...</div>
<div class="a" style="left:1553.80px;top:353.10px;width:3.00px;height:3.00px;background:#dfe6ef;border-radius:50%"></div>
<div class="a" style="left:1553.80px;top:357.80px;width:3.00px;height:3.00px;background:#dfe6ef;border-radius:50%"></div>
<div class="a" style="left:1553.80px;top:362.50px;width:3.00px;height:3.00px;background:#dfe6ef;border-radius:50%"></div>
<div class="a" style="left:201.00px;top:406.80px;width:1399.00px;height:1.00px;background:#223047"></div>
<div class="a" style="left:201.00px;top:407.80px;width:1399.00px;height:1.00px;background:rgba(34,48,71,0.45)"></div>
<div class="a" style="left:209.10px;top:381.70px;width:15.80px;height:16.20px;border:1.3px solid #7c8594;border-radius:4px;box-sizing:border-box"></div>
<div class="t tok" style="left:400.40px;top:386.23px;font-size:11.3px;line-height:11.3px;color:#dfe6ef;font-weight:400;-webkit-text-stroke:0.45px #dfe6ef;letter-spacing:0.136px">25 <svg width="9" height="8" viewBox="0 0 9 8" style="vertical-align:0px;margin:0 1.3px"><path d="M0.5 4H7M4.5 1.2 7.5 4 4.5 6.8" fill="none" stroke="#dfe6ef" stroke-width="1.5"/></svg> 5,380 (∑ 5,405)</div>
<div class="t" style="left:302.40px;top:386.32px;font-size:11.2px;line-height:11.2px;color:#dfe6ef;font-weight:400;-webkit-text-stroke:0.45px #dfe6ef;letter-spacing:-0.120px">25.87s</div>
<div class="t" style="left:1388.60px;top:386.23px;font-size:11.3px;line-height:11.3px;color:#dfe6ef;font-weight:400;-webkit-text-stroke:0.45px #dfe6ef;letter-spacing:0.024px">208.9354</div>
<div class="a" style="left:703.70px;top:380.40px;width:45.80px;height:22.00px;background:#1a2030;border-radius:5px"></div>
<div class="t" style="left:708.40px;top:386.50px;font-size:11.1px;line-height:11.1px;color:#d4dbe6;font-weight:700;-webkit-text-stroke:0px #d4dbe6;letter-spacing:-0.031px;">default</div>
<svg class="a" style="left:854.50px;top:384.40px;" width="14.5" height="14.5" viewBox="0 0 24 24" fill="none" stroke="#c8cfda" stroke-width="2" stroke-linecap="round" stroke-linejoin="round"><path d="M12.586 2.586A2 2 0 0 0 11.172 2H4a2 2 0 0 0-2 2v7.172a2 2 0 0 0 .586 1.414l8.704 8.704a2.426 2.426 0 0 0 3.42 0l6.58-6.58a2.426 2.426 0 0 0 0-3.42z"/><circle cx="7.5" cy="7.5" r=".5" fill="currentColor"/></svg>
<div class="a" style="left:997.35px;top:380.00px;width:383.00px;height:23.10px;border:1px solid #28334a;border-radius:5px;box-sizing:border-box"></div>
<div class="t" style="left:1005.75px;top:384.95px;font-size:12.1px;line-height:12.1px;color:#d6dee8;font-weight:400;-webkit-text-stroke:0.35px #d6dee8;letter-spacing:-0.001px;">{&quot;resourceAttributes&quot;:{&quot;telemetry.sdk.language&quot;:&quot;python&quot;,&quot;telemetry...</div>
<div class="a" style="left:1553.80px;top:385.40px;width:3.00px;height:3.00px;background:#dfe6ef;border-radius:50%"></div>
<div class="a" style="left:1553.80px;top:390.10px;width:3.00px;height:3.00px;background:#dfe6ef;border-radius:50%"></div>
<div class="a" style="left:1553.80px;top:394.80px;width:3.00px;height:3.00px;background:#dfe6ef;border-radius:50%"></div>
<div class="a" style="left:201.00px;top:439.10px;width:1399.00px;height:1.00px;background:#223047"></div>
<div class="a" style="left:201.00px;top:440.10px;width:1399.00px;height:1.00px;background:rgba(34,48,71,0.45)"></div>
<div class="a" style="left:209.10px;top:414.00px;width:15.80px;height:16.20px;border:1.3px solid #7c8594;border-radius:4px;box-sizing:border-box"></div>
<div class="t tok" style="left:400.40px;top:418.53px;font-size:11.3px;line-height:11.3px;color:#dfe6ef;font-weight:400;-webkit-text-stroke:0.45px #dfe6ef;letter-spacing:-0.142px">49 <svg width="9" height="8" viewBox="0 0 9 8" style="vertical-align:0px;margin:0 1.3px"><path d="M0.5 4H7M4.5 1.2 7.5 4 4.5 6.8" fill="none" stroke="#dfe6ef" stroke-width="1.5"/></svg> 1,881 (∑ 1,930)</div>
<div class="t" style="left:302.40px;top:418.62px;font-size:11.2px;line-height:11.2px;color:#dfe6ef;font-weight:400;-webkit-text-stroke:0.45px #dfe6ef;letter-spacing:-0.120px">8.96s</div>
<div class="t" style="left:1388.60px;top:418.53px;font-size:11.3px;line-height:11.3px;color:#dfe6ef;font-weight:400;-webkit-text-stroke:0.45px #dfe6ef;letter-spacing:0.024px">215.4278</div>
<div class="a" style="left:703.70px;top:412.70px;width:45.80px;height:22.00px;background:#1a2030;border-radius:5px"></div>
<div class="t" style="left:708.40px;top:418.80px;font-size:11.1px;line-height:11.1px;color:#d4dbe6;font-weight:700;-webkit-text-stroke:0px #d4dbe6;letter-spacing:-0.031px;">default</div>
<svg class="a" style="left:854.50px;top:416.70px;" width="14.5" height="14.5" viewBox="0 0 24 24" fill="none" stroke="#c8cfda" stroke-width="2" stroke-linecap="round" stroke-linejoin="round"><path d="M12.586 2.586A2 2 0 0 0 11.172 2H4a2 2 0 0 0-2 2v7.172a2 2 0 0 0 .586 1.414l8.704 8.704a2.426 2.426 0 0 0 3.42 0l6.58-6.58a2.426 2.426 0 0 0 0-3.42z"/><circle cx="7.5" cy="7.5" r=".5" fill="currentColor"/></svg>
<div class="a" style="left:997.35px;top:412.30px;width:383.00px;height:23.10px;border:1px solid #28334a;border-radius:5px;box-sizing:border-box"></div>
<div class="t" style="left:1005.75px;top:417.25px;font-size:12.1px;line-height:12.1px;color:#d6dee8;font-weight:400;-webkit-text-stroke:0.35px #d6dee8;letter-spacing:-0.001px;">{&quot;resourceAttributes&quot;:{&quot;telemetry.sdk.language&quot;:&quot;python&quot;,&quot;telemetry...</div>
<div class="a" style="left:1553.80px;top:417.70px;width:3.00px;height:3.00px;background:#dfe6ef;border-radius:50%"></div>
<div class="a" style="left:1553.80px;top:422.40px;width:3.00px;height:3.00px;background:#dfe6ef;border-radius:50%"></div>
<div class="a" style="left:1553.80px;top:427.10px;width:3.00px;height:3.00px;background:#dfe6ef;border-radius:50%"></div>
<div class="a" style="left:201.00px;top:471.40px;width:1399.00px;height:1.00px;background:#223047"></div>
<div class="a" style="left:201.00px;top:472.40px;width:1399.00px;height:1.00px;background:rgba(34,48,71,0.45)"></div>
<div class="a" style="left:209.10px;top:446.30px;width:15.80px;height:16.20px;border:1.3px solid #7c8594;border-radius:4px;box-sizing:border-box"></div>
<div class="t tok" style="left:400.40px;top:450.83px;font-size:11.3px;line-height:11.3px;color:#dfe6ef;font-weight:400;-webkit-text-stroke:0.45px #dfe6ef;letter-spacing:0.056px">29 <svg width="9" height="8" viewBox="0 0 9 8" style="vertical-align:0px;margin:0 1.3px"><path d="M0.5 4H7M4.5 1.2 7.5 4 4.5 6.8" fill="none" stroke="#dfe6ef" stroke-width="1.5"/></svg> 331 (∑ 360)</div>
<div class="t" style="left:302.40px;top:450.92px;font-size:11.2px;line-height:11.2px;color:#dfe6ef;font-weight:400;-webkit-text-stroke:0.45px #dfe6ef;letter-spacing:-0.120px">1.61s</div>
<div class="t" style="left:1388.60px;top:450.83px;font-size:11.3px;line-height:11.3px;color:#dfe6ef;font-weight:400;-webkit-text-stroke:0.45px #dfe6ef;letter-spacing:0.024px">223.3269</div>
<div class="a" style="left:703.70px;top:445.00px;width:45.80px;height:22.00px;background:#1a2030;border-radius:5px"></div>
<div class="t" style="left:708.40px;top:451.10px;font-size:11.1px;line-height:11.1px;color:#d4dbe6;font-weight:700;-webkit-text-stroke:0px #d4dbe6;letter-spacing:-0.031px;">default</div>
<svg class="a" style="left:854.50px;top:449.00px;" width="14.5" height="14.5" viewBox="0 0 24 24" fill="none" stroke="#c8cfda" stroke-width="2" stroke-linecap="round" stroke-linejoin="round"><path d="M12.586 2.586A2 2 0 0 0 11.172 2H4a2 2 0 0 0-2 2v7.172a2 2 0 0 0 .586 1.414l8.704 8.704a2.426 2.426 0 0 0 3.42 0l6.58-6.58a2.426 2.426 0 0 0 0-3.42z"/><circle cx="7.5" cy="7.5" r=".5" fill="currentColor"/></svg>
<div class="a" style="left:997.35px;top:444.60px;width:383.00px;height:23.10px;border:1px solid #28334a;border-radius:5px;box-sizing:border-box"></div>
<div class="t" style="left:1005.75px;top:449.55px;font-size:12.1px;line-height:12.1px;color:#d6dee8;font-weight:400;-webkit-text-stroke:0.35px #d6dee8;letter-spacing:-0.001px;">{&quot;resourceAttributes&quot;:{&quot;telemetry.sdk.language&quot;:&quot;python&quot;,&quot;telemetry...</div>
<div class="a" style="left:1553.80px;top:450.00px;width:3.00px;height:3.00px;background:#dfe6ef;border-radius:50%"></div>
<div class="a" style="left:1553.80px;top:454.70px;width:3.00px;height:3.00px;background:#dfe6ef;border-radius:50%"></div>
<div class="a" style="left:1553.80px;top:459.40px;width:3.00px;height:3.00px;background:#dfe6ef;border-radius:50%"></div>
<div class="a" style="left:209.10px;top:478.60px;width:15.80px;height:16.20px;border:1.3px solid #7c8594;border-radius:4px;box-sizing:border-box"></div>
<div class="t tok" style="left:400.40px;top:483.13px;font-size:11.3px;line-height:11.3px;color:#dfe6ef;font-weight:400;-webkit-text-stroke:0.45px #dfe6ef;letter-spacing:-0.087px">28 <svg width="9" height="8" viewBox="0 0 9 8" style="vertical-align:0px;margin:0 1.3px"><path d="M0.5 4H7M4.5 1.2 7.5 4 4.5 6.8" fill="none" stroke="#dfe6ef" stroke-width="1.5"/></svg> 1,028 (∑ 1,056)</div>
<div class="t" style="left:302.40px;top:483.22px;font-size:11.2px;line-height:11.2px;color:#dfe6ef;font-weight:400;-webkit-text-stroke:0.45px #dfe6ef;letter-spacing:-0.120px">6.65s</div>
<div class="t" style="left:1388.60px;top:483.13px;font-size:11.3px;line-height:11.3px;color:#dfe6ef;font-weight:400;-webkit-text-stroke:0.45px #dfe6ef;letter-spacing:0.024px">158.7975</div>
<div class="a" style="left:703.70px;top:477.30px;width:45.80px;height:22.00px;background:#1a2030;border-radius:5px"></div>
<div class="t" style="left:708.40px;top:483.40px;font-size:11.1px;line-height:11.1px;color:#d4dbe6;font-weight:700;-webkit-text-stroke:0px #d4dbe6;letter-spacing:-0.031px;">default</div>
<svg class="a" style="left:854.50px;top:481.30px;" width="14.5" height="14.5" viewBox="0 0 24 24" fill="none" stroke="#c8cfda" stroke-width="2" stroke-linecap="round" stroke-linejoin="round"><path d="M12.586 2.586A2 2 0 0 0 11.172 2H4a2 2 0 0 0-2 2v7.172a2 2 0 0 0 .586 1.414l8.704 8.704a2.426 2.426 0 0 0 3.42 0l6.58-6.58a2.426 2.426 0 0 0 0-3.42z"/><circle cx="7.5" cy="7.5" r=".5" fill="currentColor"/></svg>
<div class="a" style="left:997.35px;top:476.90px;width:383.00px;height:23.10px;border:1px solid #28334a;border-radius:5px;box-sizing:border-box"></div>
<div class="t" style="left:1005.75px;top:481.85px;font-size:12.1px;line-height:12.1px;color:#d6dee8;font-weight:400;-webkit-text-stroke:0.35px #d6dee8;letter-spacing:-0.001px;">{&quot;resourceAttributes&quot;:{&quot;telemetry.sdk.language&quot;:&quot;python&quot;,&quot;telemetry...</div>
<div class="a" style="left:1553.80px;top:482.30px;width:3.00px;height:3.00px;background:#dfe6ef;border-radius:50%"></div>
<div class="a" style="left:1553.80px;top:487.00px;width:3.00px;height:3.00px;background:#dfe6ef;border-radius:50%"></div>
<div class="a" style="left:1553.80px;top:491.70px;width:3.00px;height:3.00px;background:#dfe6ef;border-radius:50%"></div>
<svg class="a" style="left:513.90px;top:224.00px;" width="12.2" height="12.2" viewBox="0 0 24 24" fill="none" stroke="#b8c0cc" stroke-width="2.1" stroke-linecap="round" stroke-linejoin="round"><circle cx="12" cy="12" r="10"/><path d="M12 16v-4"/><path d="M12 8h.01"/></svg>
<svg class="a" style="left:497.30px;top:256.30px;" width="12.2" height="12.2" viewBox="0 0 24 24" fill="none" stroke="#b8c0cc" stroke-width="2.1" stroke-linecap="round" stroke-linejoin="round"><circle cx="12" cy="12" r="10"/><path d="M12 16v-4"/><path d="M12 8h.01"/></svg>
<svg class="a" style="left:497.30px;top:288.60px;" width="12.2" height="12.2" viewBox="0 0 24 24" fill="none" stroke="#b8c0cc" stroke-width="2.1" stroke-linecap="round" stroke-linejoin="round"><circle cx="12" cy="12" r="10"/><path d="M12 16v-4"/><path d="M12 8h.01"/></svg>
<svg class="a" style="left:495.30px;top:320.90px;" width="12.2" height="12.2" viewBox="0 0 24 24" fill="none" stroke="#b8c0cc" stroke-width="2.1" stroke-linecap="round" stroke-linejoin="round"><circle cx="12" cy="12" r="10"/><path d="M12 16v-4"/><path d="M12 8h.01"/></svg>
<svg class="a" style="left:493.80px;top:353.20px;" width="12.2" height="12.2" viewBox="0 0 24 24" fill="none" stroke="#b8c0cc" stroke-width="2.1" stroke-linecap="round" stroke-linejoin="round"><circle cx="12" cy="12" r="10"/><path d="M12 16v-4"/><path d="M12 8h.01"/></svg>
<svg class="a" style="left:516.30px;top:385.50px;" width="12.2" height="12.2" viewBox="0 0 24 24" fill="none" stroke="#b8c0cc" stroke-width="2.1" stroke-linecap="round" stroke-linejoin="round"><circle cx="12" cy="12" r="10"/><path d="M12 16v-4"/><path d="M12 8h.01"/></svg>
<svg class="a" style="left:511.30px;top:417.80px;" width="12.2" height="12.2" viewBox="0 0 24 24" fill="none" stroke="#b8c0cc" stroke-width="2.1" stroke-linecap="round" stroke-linejoin="round"><circle cx="12" cy="12" r="10"/><path d="M12 16v-4"/><path d="M12 8h.01"/></svg>
<svg class="a" style="left:495.80px;top:450.10px;" width="12.2" height="12.2" viewBox="0 0 24 24" fill="none" stroke="#b8c0cc" stroke-width="2.1" stroke-linecap="round" stroke-linejoin="round"><circle cx="12" cy="12" r="10"/><path d="M12 16v-4"/><path d="M12 8h.01"/></svg>
<svg class="a" style="left:512.30px;top:482.40px;" width="12.2" height="12.2" viewBox="0 0 24 24" fill="none" stroke="#b8c0cc" stroke-width="2.1" stroke-linecap="round" stroke-linejoin="round"><circle cx="12" cy="12" r="10"/><path d="M12 16v-4"/><path d="M12 8h.01"/></svg>
<div class="a" style="left:201.00px;top:503.80px;width:1399.00px;height:14.50px;background:#2b2b2c"></div>
<div class="a" style="left:201.00px;top:517.00px;width:1399.00px;height:1.50px;background:#3a3d43"></div>
<div class="a" style="left:847.30px;top:507.00px;width:750.00px;height:9.00px;background:#8c8c8c;border-radius:4.5px"></div>
<div class="t" style="left:1099.30px;top:991.85px;font-size:13.4px;line-height:13.4px;color:#dfe6ef;font-weight:400;-webkit-text-stroke:0.38px #dfe6ef;letter-spacing:-0.036px;">Rows per page</div>
<div class="a" style="left:1196.90px;top:983.20px;width:68.40px;height:31.30px;border:2px solid #212c40;border-radius:7px;box-sizing:border-box;"></div>
<div class="t" style="left:1210.00px;top:991.85px;font-size:13.4px;line-height:13.4px;color:#dfe6ef;font-weight:400;-webkit-text-stroke:0.38px #dfe6ef;">50</div>
<svg class="a" style="left:1237.20px;top:991.50px;" width="14.5" height="14.5" viewBox="0 0 24 24" fill="none" stroke="#9aa3b2" stroke-width="2" stroke-linecap="round" stroke-linejoin="round"><path d="m6 9 6 6 6-6"/></svg>
<div class="t" style="left:1296.90px;top:992.02px;font-size:13.2px;line-height:13.2px;color:#dfe6ef;font-weight:400;-webkit-text-stroke:0.38px #dfe6ef;letter-spacing:-0.174px;">Page</div>
<div class="a" style="left:1332.00px;top:983.20px;width:54.60px;height:31.30px;border:2px solid #212c40;border-radius:7px;box-sizing:border-box;"></div>
<div class="t" style="left:1340.20px;top:992.15px;font-size:13.4px;line-height:13.4px;color:#dfe6ef;font-weight:400;-webkit-text-stroke:0.38px #dfe6ef;">1</div>
<div class="t" style="left:1390.10px;top:992.02px;font-size:13.2px;line-height:13.2px;color:#dfe6ef;font-weight:400;-webkit-text-stroke:0.38px #dfe6ef;letter-spacing:-0.106px;">of 1</div>
<div class="a" style="left:1443.60px;top:983.30px;width:31.10px;height:31.30px;border:1px solid #161e2c;border-radius:7px;box-sizing:border-box"></div>
<svg class="a" style="left:1451.90px;top:991.50px;" width="14.5" height="14.5" viewBox="0 0 24 24" fill="none" stroke="#7b8494" stroke-width="2.2" stroke-linecap="round" stroke-linejoin="round"><path d="m11 17-5-5 5-5"/><path d="m18 17-5-5 5-5"/></svg>
<div class="a" style="left:1482.40px;top:983.30px;width:31.10px;height:31.30px;border:1px solid #161e2c;border-radius:7px;box-sizing:border-box"></div>
<svg class="a" style="left:1490.70px;top:991.50px;" width="14.5" height="14.5" viewBox="0 0 24 24" fill="none" stroke="#7b8494" stroke-width="2.2" stroke-linecap="round" stroke-linejoin="round"><path d="m15 18-6-6 6-6"/></svg>
<div class="a" style="left:1521.90px;top:983.30px;width:31.10px;height:31.30px;border:1px solid #161e2c;border-radius:7px;box-sizing:border-box"></div>
<svg class="a" style="left:1530.20px;top:991.50px;" width="14.5" height="14.5" viewBox="0 0 24 24" fill="none" stroke="#7b8494" stroke-width="2.2" stroke-linecap="round" stroke-linejoin="round"><path d="m9 18 6-6-6-6"/></svg>
<div class="a" style="left:1560.90px;top:983.30px;width:31.10px;height:31.30px;border:1px solid #161e2c;border-radius:7px;box-sizing:border-box"></div>
<svg class="a" style="left:1569.20px;top:991.50px;" width="14.5" height="14.5" viewBox="0 0 24 24" fill="none" stroke="#7b8494" stroke-width="2.2" stroke-linecap="round" stroke-linejoin="round"><path d="m6 17 5-5-5-5"/><path d="m13 17 5-5-5-5"/></svg>
</body></html>
